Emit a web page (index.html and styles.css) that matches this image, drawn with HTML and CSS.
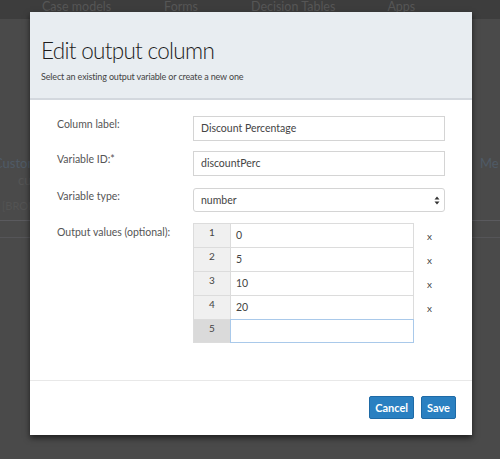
FILE: index.html
```html
<!DOCTYPE html>
<html>
<head>
<meta charset="utf-8">
<link rel="stylesheet" href="styles.css">
</head>
<body>
<div class="page">
  <nav class="topnav">
    <span class="nav-item n1">Case models</span>
    <span class="nav-item n2">Forms</span>
    <span class="nav-item n3">Decision Tables</span>
    <span class="nav-item n4">Apps</span>
  </nav>
  <div class="bgcontent">
    <div class="bgrow">
      <div class="bgleft">
        <div class="bg-title">Customer</div>
        <div class="bg-sub">cust</div>
        <div class="bg-note">[BRONZE</div>
      </div>
      <div class="bgright">
        <div class="bg-title">Me</div>
        <div class="bg-sub">n</div>
      </div>
    </div>
    <div class="bgline"></div>
    <div class="bgline short"></div>
  </div>
</div>

<div class="overlay">
  <div class="modal">
    <div class="modal-header">
      <h1 class="modal-title">Edit output column</h1>
      <p class="modal-subtitle">Select an existing output variable or create a new one</p>
    </div>
    <div class="modal-body">
      <div class="form-row">
        <label class="form-label">Column label:</label>
        <div class="form-input">Discount Percentage</div>
      </div>
      <div class="form-row">
        <label class="form-label">Variable ID:*</label>
        <div class="form-input">discountPerc</div>
      </div>
      <div class="form-row row-select">
        <label class="form-label">Variable type:</label>
        <div class="form-input form-select">
          <span>number</span>
          <svg class="select-arrows" width="6" height="9" viewBox="0 0 6 9"><path d="M3 0.5 L5.5 3.5 H0.5 Z M3 8.5 L5.5 5.5 H0.5 Z" fill="#333"/></svg>
        </div>
      </div>
      <div class="form-row row-values">
        <label class="form-label">Output values (optional):</label>
        <div class="values">
          <div class="value-row"><div class="vnum">1</div><div class="vcell">0</div><div class="vdel">x</div></div>
          <div class="value-row"><div class="vnum">2</div><div class="vcell">5</div><div class="vdel">x</div></div>
          <div class="value-row"><div class="vnum">3</div><div class="vcell">10</div><div class="vdel">x</div></div>
          <div class="value-row"><div class="vnum">4</div><div class="vcell">20</div><div class="vdel">x</div></div>
          <div class="value-row last"><div class="vnum">5</div><div class="vcell focus"></div><div class="vdel"></div></div>
        </div>
      </div>
    </div>
    <div class="modal-footer">
      <button class="btn">Cancel</button>
      <button class="btn">Save</button>
    </div>
  </div>
</div>
</body>
</html>
```
FILE: styles.css
```css
html, body {
  margin: 0;
  padding: 0;
}
body {
  width: 500px;
  height: 459px;
  overflow: hidden;
  background: #4a4a4a;
  font-family: Lato, "Open Sans", sans-serif;
  position: relative;
}
.page {
  height: 459px;
}
.topnav {
  height: 19px;
  background: #3d3d3d;
  display: flex;
  font-size: 12.5px;
  line-height: 13px;
  color: #565656;
}
.nav-item { white-space: nowrap; }
.n1 { margin-left: 42px; }
.n2 { margin-left: 53px; }
.n3 { margin-left: 53px; }
.n4 { margin-left: 52px; }
.bgcontent {
  padding-top: 136px;
}
.bgrow {
  display: flex;
  justify-content: space-between;
}
.bgleft, .bgright { font-size: 13px; }
.bgleft { margin-left: -6px; }
.bgright { margin-right: -20px; width: 40px; }
.bg-title { color: #4f5a66; line-height: 16px; }
.bg-sub { color: #555; margin-left: 24px; line-height: 18px; }
.bg-note { color: #535353; font-size: 11px; margin-top: 10px; margin-left: 8px; }
.bgline {
  height: 1px;
  background: #5a5a5e;
  margin-top: 8px;
}
.bgline.short { margin-top: 16px; background: #555558; }

.overlay {
  position: absolute;
  left: 0;
  top: 0;
  width: 500px;
  height: 459px;
}
.modal {
  position: absolute;
  left: 30px;
  top: 12px;
  width: 442px;
  background: #fff;
  box-shadow: 0 3px 6px rgba(0,0,0,0.6);
}
.modal-header {
  background: #e8edf1;
  border-bottom: 2px solid #d3d8de;
  padding: 26px 11px 16px;
  height: 44px;
}
.modal-title {
  margin: 0;
  font-weight: 300;
  font-size: 22.5px;
  line-height: 26px;
  color: #1c1c1c;
  letter-spacing: -0.7px;
}
.modal-subtitle {
  margin: 7px 0 0;
  font-size: 9px;
  letter-spacing: -0.15px;
  color: #444;
  line-height: 11px;
}
.modal-body {
  padding: 16px 27px 0;
  height: 264px;
  border-bottom: 1px solid #e8e8e8;
}
.form-row {
  display: grid;
  grid-template-columns: 136px 252px;
  margin-bottom: 10px;
}
.row-select { margin-top: 12px; margin-bottom: 11px; }
.form-label {
  font-size: 10.5px;
  color: #555;
  padding-top: 2px;
  line-height: 12px;
}
.form-input {
  height: 23px;
  border: 1px solid #d4d4d4;
  font-size: 10.5px;
  color: #444;
  line-height: 23px;
  padding-left: 7px;
  box-sizing: content-box;
  width: 243px;
}
.form-select {
  border-radius: 3px;
  height: 22px;
  line-height: 22px;
  display: flex;
  align-items: center;
  justify-content: space-between;
  padding-right: 2px;
  width: 241px;
}
.select-arrows { margin-right: 2px; }
.row-values .form-label { padding-top: 3px; }
.values {
  display: flex;
  flex-direction: column;
}
.value-row {
  display: flex;
  height: 24px;
}
.vnum {
  width: 36px;
  background: #f0f0f0;
  border: 1px solid #dcdcdc;
  border-bottom: none;
  border-right: none;
  font-size: 10px;
  color: #444;
  text-align: center;
  line-height: 16px;
}
.vcell {
  width: 177px;
  border: 1px solid #dcdcdc;
  border-bottom: none;
  font-size: 10.5px;
  color: #444;
  padding-left: 5px;
  line-height: 23px;
}
.value-row.last .vnum {
  background: #dadada;
  border-bottom: 1px solid #dcdcdc;
}
.vcell.focus {
  border: 1px solid #a9c9ea;
}
.vdel {
  font-size: 10px;
  color: #444;
  margin-left: 13px;
  line-height: 24px;
  padding-top: 1px;
}
.modal-footer {
  display: flex;
  justify-content: flex-end;
  gap: 7px;
  padding: 15px 16px 16px;
}
.btn {
  background: #2a80c1;
  border: 1px solid #1e6aa6;
  color: #fff;
  font-family: Lato, "Open Sans", sans-serif;
  font-size: 11px;
  font-weight: 700;
  height: 23px;
  padding: 0 5px;
  border-radius: 2px;
  line-height: 21px;
}
```
